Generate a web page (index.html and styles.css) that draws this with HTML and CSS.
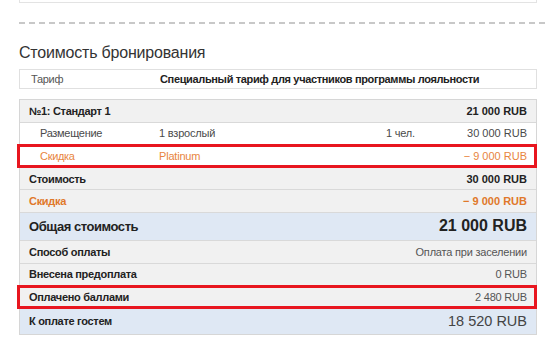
FILE: index.html
```html
<!DOCTYPE html>
<html lang="ru">
<head>
<meta charset="utf-8">
<link rel="stylesheet" href="styles.css">
</head>
<body>
<div class="page">
  <div class="prev-box"></div>
  <div class="divider"></div>
  <h2 class="title">Стоимость бронирования</h2>
  <div class="tariff">
    <span class="tariff-label">Тариф</span>
    <span class="tariff-value">Специальный тариф для участников программы лояльности</span>
  </div>
  <div class="price-table">
    <div class="row grey bold">
      <span class="label">№1: Стандарт 1</span>
      <span class="amount">21 000 RUB</span>
    </div>
    <div class="row white sub">
      <span class="label">Размещение</span>
      <span class="col2">1 взрослый</span>
      <span class="col3">1 чел.</span>
      <span class="amount">30 000 RUB</span>
    </div>
    <div class="row white sub discount marked">
      <span class="label">Скидка</span>
      <span class="col2">Platinum</span>
      <span class="col3"></span>
      <span class="amount">− 9 000 RUB</span>
    </div>
    <div class="row grey bold">
      <span class="label">Стоимость</span>
      <span class="amount">30 000 RUB</span>
    </div>
    <div class="row grey bold discount-strong">
      <span class="label">Скидка</span>
      <span class="amount">− 9 000 RUB</span>
    </div>
    <div class="row blue total">
      <span class="label">Общая стоимость</span>
      <span class="amount">21 000 RUB</span>
    </div>
    <div class="row grey">
      <span class="label strong">Способ оплаты</span>
      <span class="amount light">Оплата при заселении</span>
    </div>
    <div class="row grey">
      <span class="label strong">Внесена предоплата</span>
      <span class="amount light">0 RUB</span>
    </div>
    <div class="row grey marked">
      <span class="label strong">Оплачено баллами</span>
      <span class="amount light">2 480 RUB</span>
    </div>
    <div class="row blue due">
      <span class="label strong">К оплате гостем</span>
      <span class="amount big">18 520 RUB</span>
    </div>
  </div>
</div>
</body>
</html>
```

FILE: styles.css
```css
* { box-sizing: border-box; }
html, body { margin: 0; padding: 0; background: #fff; }
body {
  font-family: "Liberation Sans", Arial, sans-serif;
  font-size: 11px;
  color: #333;
}
.page {
  padding-left: 19px;
  width: 546px;
}
.prev-box {
  width: 518px;
  height: 3px;
  border: 1px solid #e3e3e3;
  border-top: none;
}
.divider {
  margin-top: 19px;
  height: 2px;
  background-image: linear-gradient(to right, #c8c8c8 0, #c8c8c8 6px, transparent 6px);
  background-size: 10px 2px;
  background-repeat: repeat-x;
}
.title {
  margin: 19px 0 0;
  font-size: 16px;
  line-height: 20px;
  font-weight: normal;
  letter-spacing: -0.2px;
  color: #333;
}
.tariff {
  margin-top: 6px;
  width: 518px;
  height: 20px;
  border: 1px solid #e0e0e0;
  display: grid;
  grid-template-columns: 129px 1fr;
  align-items: center;
  padding-left: 11px;
}
.tariff-label { color: #555; letter-spacing: -0.3px; }
.tariff-value { font-weight: bold; color: #222; letter-spacing: -0.35px; }
.price-table {
  margin-top: 10px;
  width: 518px;
  border: 1px solid #d6d6d6;
}
.row {
  display: grid;
  grid-template-columns: 1fr auto;
  align-items: center;
  height: 22.6px;
  padding: 0 9px;
  border-bottom: 1px solid #d9d9d9;
  position: relative;
}
.row:last-child { border-bottom: none; }
.label { letter-spacing: -0.3px; }
.col2 { letter-spacing: -0.2px; }
.col3 { letter-spacing: -0.2px; }
.amount { text-align: right; }
.grey { background: #f1f1f1; }
.white { background: #fff; }
.blue { background: #dfe8f4; }
.bold { font-weight: bold; color: #222; }
.strong { font-weight: bold; color: #222; }
.light { color: #555; letter-spacing: -0.2px; }
.sub {
  grid-template-columns: 119px 227px 1fr auto;
  padding-left: 20px;
  color: #4a4a4a;
}
.discount { color: #e8853e; }
.discount-strong { color: #e0782a; }
.total {
  height: 28px;
  font-weight: bold;
  color: #222;
}
.total .label { font-size: 13px; letter-spacing: -0.45px; }
.total .amount { font-size: 16px; }
.due { height: 25px; }
.big { font-size: 14.5px; color: #444; letter-spacing: 0; }
.marked::after {
  content: "";
  position: absolute;
  left: -3px;
  right: -1px;
  top: -1px;
  bottom: -1px;
  border: 3px solid #e8161f;
  pointer-events: none;
}
```
